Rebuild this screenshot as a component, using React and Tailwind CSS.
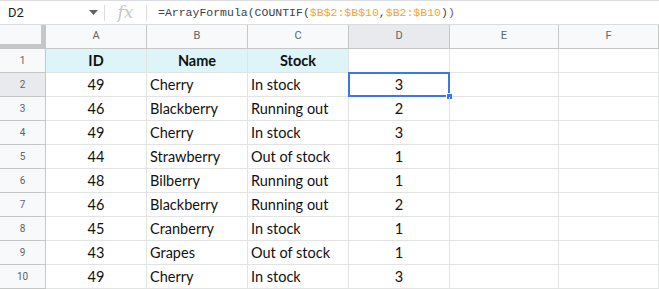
import { Fragment } from "react"

const cols = [
    { key: 'A', w: 'w-[101px]' },
    { key: 'B', w: 'w-[101px]' },
    { key: 'C', w: 'w-[101px]' },
    { key: 'D', w: 'w-[101px]' },
    { key: 'E', w: 'w-[109px]' },
    { key: 'F', w: 'w-[100px]' },
]

const rows = [
    ['49', 'Cherry', 'In stock', '3'],
    ['46', 'Blackberry', 'Running out', '2'],
    ['49', 'Cherry', 'In stock', '3'],
    ['44', 'Strawberry', 'Out of stock', '1'],
    ['48', 'Bilberry', 'Running out', '1'],
    ['46', 'Blackberry', 'Running out', '2'],
    ['45', 'Cranberry', 'In stock', '1'],
    ['43', 'Grapes', 'Out of stock', '1'],
    ['49', 'Cherry', 'In stock', '3'],
]

const cellFont = "font-['Lato','Open_Sans',sans-serif] text-[14.5px] text-[#111]"

function RowHeader({ n, active }) {
    return (
        <div className={`w-[46px] h-[24px] shrink-0 flex items-center justify-center border-r border-b border-[#c4c7c5] font-['Roboto',sans-serif] text-[10px] text-[#5f6368] ${active ? 'bg-[#e8eaed]' : 'bg-[#f8f9fa]'}`}>
            {n}
        </div>
    )
}

export default function App() {
    return (
        <div className="w-[659px] h-[289px] bg-white overflow-hidden">
            {/* formula bar */}
            <div className="h-[25px] flex items-center border-t border-b border-[#dadce0] font-['Roboto',sans-serif]">
                <div className="w-[104px] flex items-center justify-between pl-[8px] pr-[6px]">
                    <span className="text-[13px] text-[#202124]">D2</span>
                    <svg width="9" height="5" viewBox="0 0 9 5"><path d="M0 0h9L4.5 5z" fill="#5f6368" /></svg>
                </div>
                <div className="w-px h-[16px] bg-[#dadce0]" />
                <div className="w-[41px] flex items-center justify-center">
                    <span className="font-['DejaVu_Serif',serif] italic text-[17px] leading-none text-[#c4c7c5]">fx</span>
                </div>
                <div className="w-px h-[16px] bg-[#dadce0]" />
                <div className="pl-[11px] font-['Liberation_Mono',monospace] text-[11.5px] text-[#3c4043] whitespace-pre">
                    =ArrayFormula(COUNTIF(<span className="text-[#f4a23e]">$B$2:$B$10</span>,<span className="text-[#f4a23e]">$B2:$B10</span>)<span className="text-[#6b4fa0]">)</span>
                </div>
            </div>

            {/* column headers */}
            <div className="flex h-[24px]">
                <div className="w-[46px] shrink-0 bg-[#f8f9fa] border-r-[5px] border-b-[5px] border-[#c4c7c5]" />
                {cols.map(c => (
                    <div key={c.key} className={`${c.w} shrink-0 flex items-center justify-center border-r border-b border-[#c4c7c5] font-['Roboto',sans-serif] text-[11px] text-[#5f6368] ${c.key === 'D' ? 'bg-[#e8eaed]' : 'bg-[#f8f9fa]'}`}>
                        {c.key}
                    </div>
                ))}
            </div>

            {/* header row 1 */}
            <div className="flex">
                <RowHeader n={1} />
                {['ID', 'Name', 'Stock'].map(t => (
                    <div key={t} className={`w-[101px] h-[24px] shrink-0 flex items-center justify-center bg-[#ddf5f8] border-r border-b border-[#e2e3e3] font-bold ${cellFont}`}>
                        {t}
                    </div>
                ))}
                {cols.slice(3).map(c => (
                    <div key={c.key} className={`${c.w} h-[24px] shrink-0 border-r border-b border-[#e2e3e3]`} />
                ))}
            </div>

            {rows.map((r, i) => (
                <div key={i} className="flex">
                    <RowHeader n={i + 2} active={i === 0} />
                    <div className={`w-[101px] h-[24px] shrink-0 flex items-center justify-center border-r border-b border-[#e2e3e3] ${cellFont}`}>{r[0]}</div>
                    <div className={`w-[101px] h-[24px] shrink-0 flex items-center pl-[3px] border-r border-b border-[#e2e3e3] ${cellFont}`}>{r[1]}</div>
                    <div className={`w-[101px] h-[24px] shrink-0 flex items-center pl-[3px] border-r border-b border-[#e2e3e3] whitespace-nowrap overflow-hidden ${cellFont}`}>{r[2]}</div>
                    <div className={`relative w-[101px] h-[24px] shrink-0 flex items-center justify-center border-r border-b border-[#e2e3e3] ${cellFont}`}>
                        {r[3]}
                        {i === 0 && (
                            <Fragment>
                                <div className="absolute -left-px -top-px w-[102px] h-[25px] border-2 border-[#3b78e7]" />
                                <div className="absolute right-[-4px] bottom-[-4px] w-[7px] h-[7px] bg-[#3b78e7] border border-white" />
                            </Fragment>
                        )}
                    </div>
                    <div className="w-[109px] h-[24px] shrink-0 border-r border-b border-[#e2e3e3]" />
                    <div className="w-[100px] h-[24px] shrink-0 border-r border-b border-[#e2e3e3]" />
                </div>
            ))}
        </div>
    )
}
